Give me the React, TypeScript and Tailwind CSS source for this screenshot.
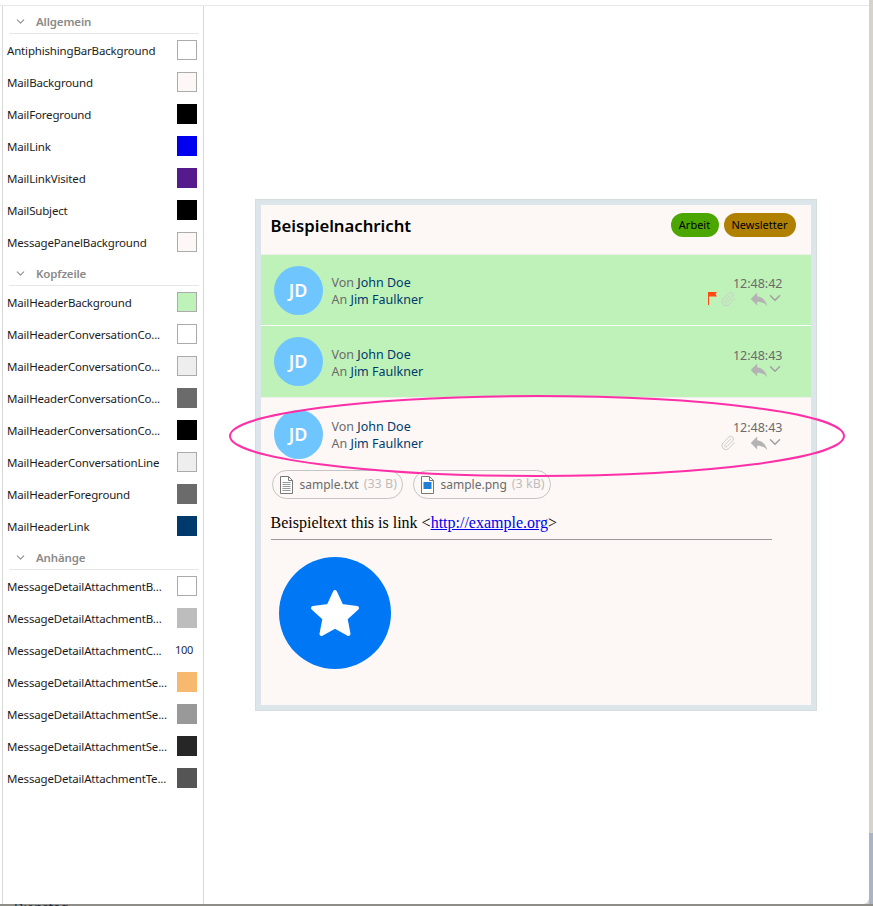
import { ChevronDown, Paperclip } from "lucide-react";
import { MdReply } from "react-icons/md";

type Row = { name: string; color?: string; boxed?: boolean; value?: string };

const SECTIONS: { title: string; rows: Row[] }[] = [
  {
    title: "Allgemein",
    rows: [
      { name: "AntiphishingBarBackground", color: "#ffffff", boxed: true },
      { name: "MailBackground", color: "#fdf8f5", boxed: true },
      { name: "MailForeground", color: "#000000" },
      { name: "MailLink", color: "#0000ee" },
      { name: "MailLinkVisited", color: "#551a8b" },
      { name: "MailSubject", color: "#000000" },
      { name: "MessagePanelBackground", color: "#fdf8f5", boxed: true },
    ],
  },
  {
    title: "Kopfzeile",
    rows: [
      { name: "MailHeaderBackground", color: "#bff2b9", boxed: true },
      { name: "MailHeaderConversationCo...", color: "#ffffff", boxed: true },
      { name: "MailHeaderConversationCo...", color: "#eeeeee", boxed: true },
      { name: "MailHeaderConversationCo...", color: "#6b6b6b" },
      { name: "MailHeaderConversationCo...", color: "#000000" },
      { name: "MailHeaderConversationLine", color: "#eeeeee", boxed: true },
      { name: "MailHeaderForeground", color: "#6b6b6b" },
      { name: "MailHeaderLink", color: "#003a6c" },
    ],
  },
  {
    title: "Anhänge",
    rows: [
      { name: "MessageDetailAttachmentB...", color: "#ffffff", boxed: true },
      { name: "MessageDetailAttachmentB...", color: "#bdbdbd" },
      { name: "MessageDetailAttachmentC...", value: "100" },
      { name: "MessageDetailAttachmentSe...", color: "#f7b96f" },
      { name: "MessageDetailAttachmentSe...", color: "#999999" },
      { name: "MessageDetailAttachmentSe...", color: "#262626" },
      { name: "MessageDetailAttachmentTe...", color: "#555555" },
    ],
  },
];

function SettingRow({ row }: { row: Row }) {
  return (
    <div className="flex h-[32px] items-center justify-between pl-[4px] pr-[6px]">
      <span className="whitespace-nowrap pt-[1px] text-[11.5px] tracking-[-0.17px] text-[#1c1c1c]">{row.name}</span>
      {row.value ? (
        <span className="mr-[4px] text-[11px] tracking-[-0.3px] text-[#1c2b4a]">{row.value}</span>
      ) : (
        <span
          className={`h-[20px] w-[20px] ${row.boxed ? "border border-[#ababab]" : ""}`}
          style={{ backgroundColor: row.color }}
        />
      )}
    </div>
  );
}

function Sidebar() {
  return (
    <div className="w-[201px] shrink-0 border-r border-[#d9d9d9] pt-[4px]">
      {SECTIONS.map((s) => (
        <div key={s.title} className="mb-[4px]">
          <div className="ml-[6px] mr-[4px] flex h-[24px] items-center gap-[9px] border-b border-[#e6e6e6] pl-[5px]">
            <ChevronDown size={13} className="text-[#8f8f8f]" />
            <span className="text-[11.5px] font-semibold tracking-[-0.15px] text-[#8a8a8a]">{s.title}</span>
          </div>
          {s.rows.map((r, i) => (
            <SettingRow key={i} row={r} />
          ))}
        </div>
      ))}
    </div>
  );
}

function FlagIcon() {
  return (
    <svg width="9" height="13" viewBox="0 0 9 13">
      <path d="M0 0h1v13H0z" fill="#ff4a12" />
      <path d="M1 0h8L7.5 2 9 4.5H1z" fill="#ff4a12" />
    </svg>
  );
}

function FileIcon({ image }: { image?: boolean }) {
  return (
    <svg width="13" height="18" viewBox="0 0 13 18" className="shrink-0">
      <path d="M.5.5h8l4 4v13H.5z" fill="#ffffff" stroke="#777777" />
      <path d="M8.5.5v4h4" fill="none" stroke="#777777" />
      {image ? (
        <rect x="2.5" y="6" width="8" height="7" fill="#1f7fd6" />
      ) : (
        <path d="M2.5 6.5h8M2.5 8.5h8M2.5 10.5h8M2.5 12.5h8M2.5 14.5h8" stroke="#9a9a9a" />
      )}
    </svg>
  );
}

function MessageHead({
  time,
  flag,
  clip,
  green,
  tall,
  low,
}: {
  time: string;
  flag?: boolean;
  clip?: boolean;
  green?: boolean;
  tall?: boolean;
  low?: boolean;
}) {
  return (
    <div
      className={`flex items-center pl-[13px] pr-[28px] ${tall ? "h-[71px]" : "h-[70px]"} ${green ? "bg-[#bff2b9]" : ""} ${low ? "pt-[2px]" : ""}`}
    >
      <div className="flex h-[49px] w-[49px] items-center justify-center rounded-full bg-[#6fc6ff] text-[18px] font-semibold text-white">
        JD
      </div>
      <div className="ml-[9px] pt-[2px] text-[12.5px] leading-[17px] text-[#6b6b6b]">
        <div>
          Von <span className="text-[#003a6c]">John Doe</span>
        </div>
        <div>
          An <span className="text-[#003a6c]">Jim Faulkner</span>
        </div>
      </div>
      <div className="ml-auto flex flex-col items-end pt-[2px] text-[12.5px] leading-[17px] text-[#6b6b6b]">
        <div>{time}</div>
        <div className="mr-[-1px] mt-[-2px] flex h-[17px] items-center">
          {flag && <FlagIcon />}
          {clip && <Paperclip size={16} strokeWidth={1.5} className="ml-[3px] text-[#cccccc]" />}
          <MdReply size={22} className="ml-[12px] text-[#b3b3b3]" />
          <ChevronDown size={18} className="ml-[-4px] mt-[-2px] text-[#a0a0a0]" />
        </div>
      </div>
    </div>
  );
}

function Chip({ name, size, image, width }: { name: string; size: string; image?: boolean; width: string }) {
  return (
    <div className={`flex h-[29px] items-center rounded-full border border-[#c4c4c4] pl-[7px] ${width}`}>
      <FileIcon image={image} />
      <span className="ml-[7px] text-[12px] text-[#6b6b6b]">{name}</span>
      <span className="ml-[5px] text-[12.5px] text-[#bdbdbd]">({size})</span>
    </div>
  );
}

function Preview() {
  return (
    <div className="w-[562px] border border-[#d7dcdf] bg-[#dce6ea] p-[5px]">
      <div className="h-[500px] bg-[#fdf8f5]">
        <div className="flex h-[50px] items-start justify-between border-b border-[#f0eeec] pl-[10px] pr-[15px]">
          <span className="mt-[8px] text-[16.7px] font-semibold text-black">Beispielnachricht</span>
          <div className="mt-[8px] flex gap-[5px]">
            <span className="flex h-[24px] w-[48px] items-center justify-center rounded-full bg-[#4ca600] pt-[1px] text-[11px] text-black">
              Arbeit
            </span>
            <span className="flex h-[24px] w-[72px] items-center justify-center rounded-full bg-[#b08000] pt-[1px] text-[11px] text-black">
              Newsletter
            </span>
          </div>
        </div>
        <MessageHead time="12:48:42" flag clip green />
        <div className="h-[1px] bg-white" />
        <MessageHead time="12:48:43" green tall />
        <div className="h-[1px] bg-[#f0eeec]" />
        <MessageHead time="12:48:43" clip low />
        <div className="ml-[11px] mt-[2px] flex gap-[10px]">
          <Chip name="sample.txt" size="33 B" width="w-[131px]" />
          <Chip name="sample.png" size="3 kB" image width="w-[138px]" />
        </div>
        <div className="ml-[10px] mt-[13px] font-['Liberation_Serif',serif] text-[16px] leading-[22px] text-black">
          Beispieltext this is link &lt;
          <a className="text-[#0000ee] underline">http://example.org</a>&gt;
        </div>
        <div className="ml-[10px] mt-[5px] h-[1px] w-[501px] bg-[#9a9a9a]" />
        <div className="ml-[18px] mt-[17px] flex h-[112px] w-[112px] items-center justify-center rounded-full bg-[#0078f5]">
          <svg width="50" height="48" viewBox="0 0 50 48">
            <polygon
              points="25,3 31.5,17 47,19 35.5,29.5 38.5,45 25,37.5 11.5,45 14.5,29.5 3,19 18.5,17"
              fill="#ffffff"
              stroke="#ffffff"
              strokeWidth="4"
              strokeLinejoin="round"
            />
          </svg>
        </div>
      </div>
    </div>
  );
}

export default function App() {
  return (
    <div className="relative h-[906px] w-[873px] overflow-hidden bg-[#d6d3cd] font-['Noto_Sans',sans-serif]">
      <div className="absolute bottom-0 right-0 h-[73px] w-[4px] bg-[#a9b5c3]" />
      <div className="absolute bottom-0 left-0 right-0 h-[2px] bg-[#8f8d88]" />
      <div className="absolute left-[14px] top-[898px] text-[13px] leading-[18px] text-[#1c2b3a]">Dienstag</div>
      <div className="relative flex h-[904px] w-[869px] flex-col rounded-br-[6px] bg-white">
        <div className="h-[5px] shrink-0" />
        <div className="flex min-h-0 flex-1 border-t border-[#e8e8e8] pl-[2px]">
          <div className="flex border-l border-[#d9d9d9]">
            <Sidebar />
          </div>
          <div className="flex flex-1 items-center justify-center pr-[2px]">
            <Preview />
          </div>
        </div>
      </div>
      <svg className="pointer-events-none absolute left-[225px] top-[390px]" width="625" height="92" viewBox="0 0 625 92">
        <ellipse cx="312" cy="46" rx="307" ry="40" fill="none" stroke="#ff2fa8" strokeWidth="2" />
      </svg>
    </div>
  );
}
